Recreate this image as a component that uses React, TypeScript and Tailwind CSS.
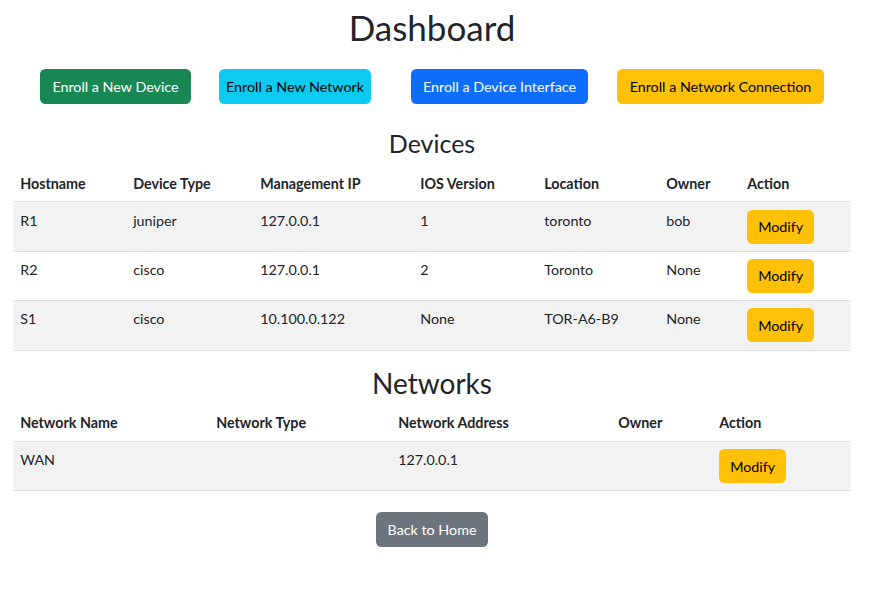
import React from "react";

const devices = [
  ["R1", "juniper", "127.0.0.1", "1", "toronto", "bob"],
  ["R2", "cisco", "127.0.0.1", "2", "Toronto", "None"],
  ["S1", "cisco", "10.100.0.122", "None", "TOR-A6-B9", "None"],
];

const networks = [["WAN", "", "127.0.0.1", ""]];

function ModifyBtn() {
  return (
    <button className="flex h-[34px] w-[67px] items-center justify-center rounded-[5.4px] bg-[#ffc107] text-[14.3px] text-black">
      Modify
    </button>
  );
}

export default function App() {
  return (
    <div className="w-[864px] bg-white px-[13px] pt-[5.5px] font-[Lato,sans-serif] text-[14.3px] text-[#212529]">
      <h1 className="h-[42px] text-center text-[35px] leading-[42px] font-normal">Dashboard</h1>

      <div className="mt-[21.5px] flex h-[35px] justify-center">
        <button className="flex h-[35px] w-[151px] items-center justify-center rounded-[5.4px] bg-[#198754] text-white">
          Enroll a New Device
        </button>
        <button className="ml-[28px] flex h-[35px] w-[152px] items-center justify-center rounded-[5.4px] bg-[#0dcaf0] text-black">
          Enroll a New Network
        </button>
        <button className="ml-[40px] flex h-[35px] w-[177px] items-center justify-center rounded-[5.4px] bg-[#0d6efd] text-white">
          Enroll a Device Interface
        </button>
        <button className="ml-[29px] flex h-[35px] w-[207px] items-center justify-center rounded-[5.4px] bg-[#ffc107] text-black">
          Enroll a Network Connection
        </button>
      </div>

      <h3 className="mt-[23.6px] h-[30px] text-center text-[25px] leading-[30px] font-normal">Devices</h3>

      <div className="mt-[8px]">
        <div className="grid grid-cols-[113px_127px_160px_124px_122px_81px_111px] border-b border-[#dee2e6] font-bold">
          {["Hostname", "Device Type", "Management IP", "IOS Version", "Location", "Owner", "Action"].map((h) => (
            <div key={h} className="px-[7.2px] py-[7.2px] leading-[21.5px]">
              {h}
            </div>
          ))}
        </div>
        {devices.map((row, i) => (
          <div
            key={i}
            className={`grid grid-cols-[113px_127px_160px_124px_122px_81px_111px] border-b border-[#dee2e6] ${
              i % 2 === 0 ? "bg-[#f2f2f2]" : "bg-white"
            }`}
          >
            {row.map((c, j) => (
              <div key={j} className="px-[7.2px] pt-[7.2px] leading-[21.5px]">
                {c}
              </div>
            ))}
            <div className="px-[7.2px] py-[7.2px]">
              <ModifyBtn />
            </div>
          </div>
        ))}
      </div>

      <h2 className="mt-[16px] h-[33.6px] text-center text-[28px] leading-[33.6px] font-normal">Networks</h2>

      <div className="mt-[5px]">
        <div className="grid grid-cols-[196px_182px_220px_101px_139px] border-b border-[#dee2e6] font-bold">
          {["Network Name", "Network Type", "Network Address", "Owner", "Action"].map((h) => (
            <div key={h} className="px-[7.2px] py-[7.2px] leading-[21.5px]">
              {h}
            </div>
          ))}
        </div>
        {networks.map((row, i) => (
          <div
            key={i}
            className="grid grid-cols-[196px_182px_220px_101px_139px] border-b border-[#dee2e6] bg-[#f2f2f2]"
          >
            {row.map((c, j) => (
              <div key={j} className="px-[7.2px] pt-[7.2px] leading-[21.5px]">
                {c}
              </div>
            ))}
            <div className="px-[7.2px] py-[7.2px]">
              <ModifyBtn />
            </div>
          </div>
        ))}
      </div>

      <div className="mt-[21px] flex justify-center pb-[46px]">
        <button className="flex h-[35px] w-[112px] items-center justify-center rounded-[5.4px] bg-[#6c757d] text-white">
          Back to Home
        </button>
      </div>
    </div>
  );
}
